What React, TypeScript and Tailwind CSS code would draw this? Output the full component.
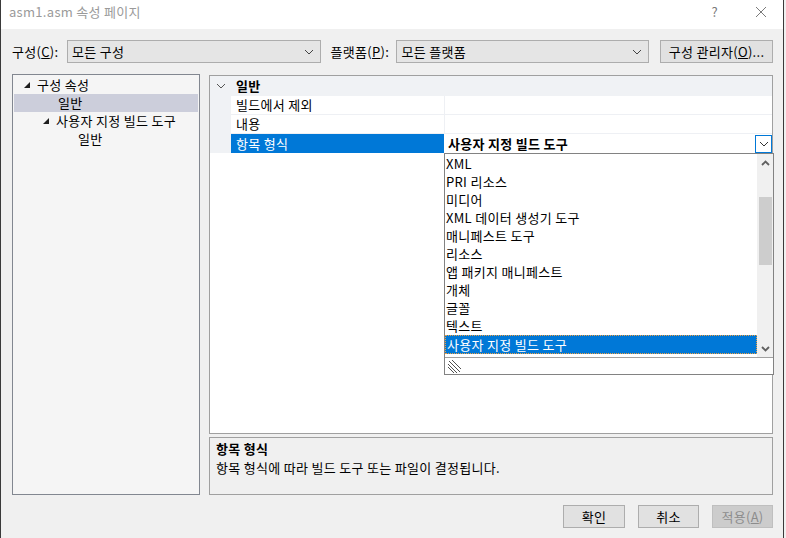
import React from "react";

const font = { fontFamily: '"Noto Sans CJK KR", "Noto Sans", sans-serif' };

function Chevron({ className = "" }: { className?: string }) {
  return (
    <svg width="10" height="6" viewBox="0 0 10 6" className={className}>
      <path d="M1 1 L5 5 L9 1" fill="none" stroke="currentColor" strokeWidth="1" />
    </svg>
  );
}

function TreeTri() {
  return (
    <svg width="6" height="6" viewBox="0 0 6 6">
      <polygon points="6,0 6,6 0,6" fill="#1e1e1e" />
    </svg>
  );
}

function Combo({ text, w }: { text: string; w: string }) {
  return (
    <div className={`${w} h-[23px] bg-[#e5e5e5] border border-[#adadad] flex items-center pl-[4px] pr-[6px]`}>
      <span className="flex-1 text-[13px] text-black">{text}</span>
      <Chevron className="text-[#444]" />
    </div>
  );
}

const items = [
  "XML",
  "PRI 리소스",
  "미디어",
  "XML 데이터 생성기 도구",
  "매니페스트 도구",
  "리소스",
  "앱 패키지 매니페스트",
  "개체",
  "글꼴",
  "텍스트",
];

export default function App() {
  return (
    <div className="w-[786px] h-[538px] flex bg-[#f0f0f0] text-black tracking-[0.3px]" style={font}>
      <div className="w-[784px] h-full flex flex-col border-l border-r border-[#3a3a3a]">
        {/* title bar */}
        <div className="h-[29px] bg-white flex items-center pl-[8px] pr-[16px] shrink-0">
          <span className="flex-1 text-[13px] text-[#9a9a9a] -mt-[5px]">asm1.asm 속성 페이지</span>
          <span className="text-[13px] text-[#7a7a7a] mr-[37px] -mt-[5px]">?</span>
          <svg width="12" height="12" viewBox="0 0 12 12" className="-mt-[5px]">
            <path d="M1 1 L11 11 M11 1 L1 11" stroke="#7a7a7a" strokeWidth="1" />
          </svg>
        </div>
        {/* body */}
        <div className="flex-1 flex flex-col bg-[#f0f0f0] pl-[11px] pr-[10px]">
          <div className="mt-[11px] flex items-center h-[23px] text-[13px]">
            <span className="w-[55px]">
              구성(<u>C</u>):
            </span>
            <Combo text="모든 구성" w="w-[254px]" />
            <span className="ml-[10px] w-[66px]">
              플랫폼(<u>P</u>):
            </span>
            <Combo text="모든 플랫폼" w="w-[253px]" />
            <button className="ml-[11px] w-[113px] h-[23px] bg-[#e1e1e1] border border-[#adadad] text-[13px]">
              구성 관리자(<u>O</u>)...
            </button>
          </div>
          <div className="mt-[11px] flex gap-[9px] h-[421px]">
            {/* tree */}
            <div className="w-[188px] h-full bg-[#f5f5f5] border border-[#828790] pt-[1px] px-[1px] text-[13px] leading-[18px]">
              <div className="h-[18px] flex items-center pl-[10px] gap-[7px]">
                <TreeTri />
                <span>구성 속성</span>
              </div>
              <div className="h-[18px] flex items-center pl-[44px] bg-[#cccedb]">일반</div>
              <div className="h-[18px] flex items-center pl-[29px] gap-[7px]">
                <TreeTri />
                <span>사용자 지정 빌드 도구</span>
              </div>
              <div className="h-[18px] flex items-center pl-[64px]">일반</div>
            </div>
            {/* right column */}
            <div className="flex-1 flex flex-col gap-[3px]">
              <div className="h-[359px] mt-[1px] border border-[#a0a0a0] bg-white flex flex-col relative">
                <div className="h-[20px] flex bg-[#f0f2f5] items-center">
                  <div className="w-[21px] flex justify-center">
                    <Chevron className="text-[#555]" />
                  </div>
                  <span className="pl-[5px] text-[13px] font-bold">일반</span>
                </div>
                {["빌드에서 제외", "내용"].map((n) => (
                  <div key={n} className="h-[19px] flex text-[13px]">
                    <div className="w-[21px] bg-[#f0f2f5]" />
                    <div className="w-[213px] border-b border-[#eef0f4] pl-[5px] flex items-center">{n}</div>
                    <div className="flex-1 border-l border-b border-[#eef0f4]" />
                  </div>
                ))}
                <div className="h-[19px] flex text-[13px]">
                  <div className="w-[21px] bg-[#f0f2f5]" />
                  <div className="w-[213px] bg-[#0078d7] text-white pl-[5px] flex items-center">항목 형식</div>
                  <div className="flex-1 flex items-center pl-[4px] font-bold">
                    <span className="flex-1">사용자 지정 빌드 도구</span>
                    <div className="w-[17px] h-[18px] border border-[#0078d7] bg-white flex items-center justify-center text-[#333]">
                      <Chevron />
                    </div>
                  </div>
                </div>
                {/* dropdown list */}
                <div className="absolute left-[234px] top-[77px] w-[330px] h-[222px] border border-[#828282] bg-white flex flex-col">
                  <div className="flex flex-1 min-h-0">
                    <div className="flex-1 pt-[1px] text-[13px]">
                      {items.map((t) => (
                        <div key={t} className="h-[18px] flex items-center pl-[1px]">
                          {t}
                        </div>
                      ))}
                      <div className="h-[19px] flex items-center pl-[1px] bg-[#0078d7] text-white border border-dotted border-[#f0a040]">
                        사용자 지정 빌드 도구
                      </div>
                    </div>
                    <div className="w-[16px] bg-[#f0f0f0] flex flex-col items-center">
                      <div className="h-[17px] flex items-center justify-center text-[#606060]">
                        <svg width="9" height="6" viewBox="0 0 9 6">
                          <path d="M1 5 L4.5 1.5 L8 5" fill="none" stroke="currentColor" strokeWidth="1.8" />
                        </svg>
                      </div>
                      <div className="mt-[26px] w-[13px] h-[68px] bg-[#cdcdcd]" />
                      <div className="flex-1" />
                      <div className="h-[17px] flex items-center justify-center text-[#606060]">
                        <svg width="9" height="6" viewBox="0 0 9 6">
                          <path d="M1 1 L4.5 4.5 L8 1" fill="none" stroke="currentColor" strokeWidth="1.8" />
                        </svg>
                      </div>
                    </div>
                  </div>
                  <div className="h-[17px] border-t border-[#a0a0a0] flex items-center pl-[2px]">
                    <svg width="14" height="14" viewBox="0 0 14 14">
                      <path d="M2 2 L13 13 M1 5 L10 14 M1 8 L7 14 M5 1 L14 10" stroke="#505050" strokeWidth="1" />
                    </svg>
                  </div>
                </div>
              </div>
              <div className="h-[58px] border border-[#a0a0a0] bg-[#f0f0f0] px-[6px] pt-[1px] text-[13px] leading-[19px]">
                <div className="font-bold">항목 형식</div>
                <div>항목 형식에 따라 빌드 도구 또는 파일이 결정됩니다.</div>
              </div>
            </div>
          </div>
          <div className="mt-[10px] flex justify-end gap-[13px] pr-0">
            <button className="w-[62px] h-[23px] bg-[#e1e1e1] border border-[#adadad] text-[13px]">확인</button>
            <button className="w-[61px] h-[23px] bg-[#e1e1e1] border border-[#adadad] text-[13px]">취소</button>
            <button className="w-[61px] h-[23px] bg-[#cccccc] border border-[#bfbfbf] text-[13px] text-[#8c8c8c]">
              적용(<u>A</u>)
            </button>
          </div>
        </div>
      </div>
      <div className="flex-1 bg-[#f0f0f0]" />
    </div>
  );
}
